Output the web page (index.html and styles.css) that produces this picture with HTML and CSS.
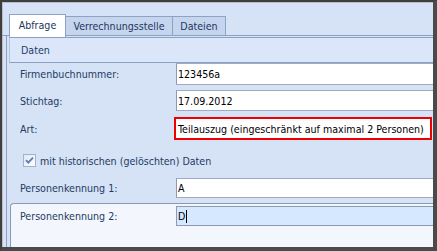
FILE: index.html
```html
<!DOCTYPE html>
<html lang="de">
<head>
    <meta charset="UTF-8">
    <title>Abfrage</title>
    <link rel="stylesheet" href="styles.css">
</head>
<body>

    <div class="window">
        <div class="tabs">
            <div class="tab active">Abfrage</div>
            <div class="tab tab-wide">Verrechnungsstelle</div>
            <div class="tab tab-small">Dateien</div>
        </div>

        <div class="panel">
            <div class="section-head">Daten</div>

            <div class="row row-first">
                <span class="label">Firmenbuchnummer:</span>
                <div class="field">123456a</div>
            </div>

            <div class="row row-second">
                <span class="label">Stichtag:</span>
                <div class="field">17.09.2012</div>
            </div>

            <div class="row row-third">
                <span class="label">Art:</span>
                <div class="field field-marked">Teilauszug (eingeschränkt auf maximal 2 Personen)</div>
            </div>

            <div class="check-row">
                <span class="check">
                    <svg width="13" height="13" viewBox="0 0 13 13">
                        <defs>
                            <linearGradient id="cb" x1="0" y1="0" x2="1" y2="1">
                                <stop offset="0" stop-color="#dfe6f1"/>
                                <stop offset="1" stop-color="#ffffff"/>
                            </linearGradient>
                        </defs>
                        <rect x="0.5" y="0.5" width="12" height="12" fill="url(#cb)" stroke="#9db2d0"/>
                        <path d="M3 6.2 L5.3 8.6 L10 3.6" fill="none" stroke="#5b7fb3" stroke-width="1.9"/>
                    </svg>
                </span>
                <span class="check-text">mit historischen (gelöschten) Daten</span>
            </div>

            <div class="row row-fifth">
                <span class="label">Personenkennung 1:</span>
                <div class="field">A</div>
            </div>

            <div class="focus-area">
                <div class="row row-sixth">
                    <span class="label">Personenkennung 2:</span>
                    <div class="field field-focus">D<span class="caret"></span></div>
                </div>
            </div>
        </div>
    </div>

</body>
</html>
```

FILE: styles.css
```css
body {
    margin: 0;
    padding: 0;
    font-family: "DejaVu Sans Condensed", "DejaVu Sans", sans-serif;
    font-size: 10.6px;
    background-color: #ffffff;
}

.window {
    width: 437px;
    height: 251px;
    box-sizing: border-box;
    border-top: 2px solid #3f3f3f;
    border-left: 2px solid #3f3f3f;
    border-right: 4px solid #4a4a4a;
    border-bottom: 4px solid #4a4a4a;
    background-color: #d6e2f5;
    box-shadow: inset 1px 1px 0 #b9bec6;
    display: flex;
    flex-direction: column;
}

/* tab strip */
.tabs {
    display: flex;
    align-items: flex-end;
    height: 33px;
    padding-left: 7px;
    border-bottom: 1px solid #8ca0c0;
}

.tab {
    box-sizing: border-box;
    height: 19px;
    line-height: 18px;
    text-align: center;
    color: #1a3760;
    background-color: #c6d5ee;
    border: 1px solid #8ea2c2;
    border-bottom: none;
    border-left: none;
}

.tab.active {
    width: 57px;
    height: 23px;
    line-height: 21px;
    margin-bottom: -2px;
    background-color: #ffffff;
    border-left: 1px solid #8ea2c2;
    position: relative;
    z-index: 1;
}

.tab-wide {
    width: 107px;
}

.tab-small {
    width: 53px;
}

/* content panel */
.panel {
    flex: 1;
    display: flex;
    flex-direction: column;
    margin-left: 4px;
    border-left: 1px solid #8ca0c0;
    padding-top: 1px;
    background-color: #d6e2f5;
}

.section-head {
    height: 24px;
    line-height: 24px;
    margin-left: 2px;
    padding-left: 11px;
    color: #1e3c64;
    background-color: #dbe6fb;
    border-top: 1px solid #8ca0c0;
    border-bottom: 1px solid #8ca0c0;
    border-left: 1px solid #b6c6df;
}

.row {
    display: flex;
    align-items: center;
    padding-left: 13px;
}

.label {
    width: 156px;
    color: #1e3c64;
}

.field {
    flex: 1;
    box-sizing: border-box;
    padding-left: 1px;
    color: #000000;
    background-color: #ffffff;
    border-top: 1px solid #9eabc0;
    border-bottom: 1px solid #9eabc0;
    border-left: 1px solid #8d9bb2;
    display: flex;
    align-items: center;
}

.row-first .field {
    height: 22px;
}

.row-second {
    margin-top: 5px;
}

.row-second .field {
    height: 21px;
}

.row-third {
    margin-top: 6px;
}

.field-marked {
    height: 23px;
    margin-left: -2px;
    margin-right: 1px;
    padding-left: 2px;
    border: 2px solid #ee0000;
}

.check-row {
    display: flex;
    align-items: center;
    margin-top: 14px;
    padding-left: 16px;
    height: 13px;
    color: #1e3c64;
}

.check {
    width: 13px;
    height: 13px;
    margin-right: 4px;
}

.row-fifth {
    margin-top: 11px;
}

.row-fifth .field {
    height: 20px;
}

.focus-area {
    flex: 1;
    margin-top: 5px;
    margin-left: 3px;
    padding-top: 2px;
    background-color: #f4f6fd;
    border-top: 1px solid #8b9ab3;
    border-left: 1px solid #8b9ab3;
    border-top-left-radius: 4px;
}

.row-sixth {
    padding-left: 9px;
}

.field-focus {
    height: 20px;
    background-color: #d5e8ff;
    border-top-color: #8b9ab3;
    border-bottom-color: #8b9ab3;
}

.caret {
    width: 1px;
    height: 13px;
    margin-left: 1px;
    background-color: #000000;
}
```
